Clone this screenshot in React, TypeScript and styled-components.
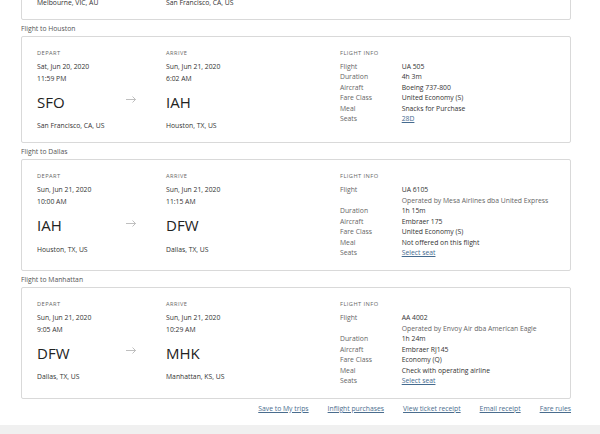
import React from 'react';
import styled, { createGlobalStyle } from 'styled-components';

type Stop = { date: string; time: string; code: string; city: string };
type InfoRow = { label: string; value: string; note?: string; link?: boolean };
type Leg = { title: string; depart: Stop; arrive: Stop; info: InfoRow[] };

const legs: Leg[] = [
    {
        title: 'Flight to San Francisco',
        depart: { date: 'Sat, Jun 20, 2020', time: '9:40 AM', code: 'MEL', city: 'Melbourne, VIC, AU' },
        arrive: { date: 'Sat, Jun 20, 2020', time: '6:10 AM', code: 'SFO', city: 'San Francisco, CA, US' },
        info: [
            { label: 'Flight', value: 'UA 60' },
            { label: 'Duration', value: '15h 30m' },
            { label: 'Aircraft', value: 'Boeing 787-9' },
            { label: 'Fare Class', value: 'United Economy (S)' },
            { label: 'Meal', value: 'Dinner' },
            { label: 'Seats', value: '41L', link: true },
        ],
    },
    {
        title: 'Flight to Houston',
        depart: { date: 'Sat, Jun 20, 2020', time: '11:59 PM', code: 'SFO', city: 'San Francisco, CA, US' },
        arrive: { date: 'Sun, Jun 21, 2020', time: '6:02 AM', code: 'IAH', city: 'Houston, TX, US' },
        info: [
            { label: 'Flight', value: 'UA 505' },
            { label: 'Duration', value: '4h 3m' },
            { label: 'Aircraft', value: 'Boeing 737-800' },
            { label: 'Fare Class', value: 'United Economy (S)' },
            { label: 'Meal', value: 'Snacks for Purchase' },
            { label: 'Seats', value: '28D', link: true },
        ],
    },
    {
        title: 'Flight to Dallas',
        depart: { date: 'Sun, Jun 21, 2020', time: '10:00 AM', code: 'IAH', city: 'Houston, TX, US' },
        arrive: { date: 'Sun, Jun 21, 2020', time: '11:15 AM', code: 'DFW', city: 'Dallas, TX, US' },
        info: [
            { label: 'Flight', value: 'UA 6105', note: 'Operated by Mesa Airlines dba United Express' },
            { label: 'Duration', value: '1h 15m' },
            { label: 'Aircraft', value: 'Embraer 175' },
            { label: 'Fare Class', value: 'United Economy (S)' },
            { label: 'Meal', value: 'Not offered on this flight' },
            { label: 'Seats', value: 'Select seat', link: true },
        ],
    },
    {
        title: 'Flight to Manhattan',
        depart: { date: 'Sun, Jun 21, 2020', time: '9:05 AM', code: 'DFW', city: 'Dallas, TX, US' },
        arrive: { date: 'Sun, Jun 21, 2020', time: '10:29 AM', code: 'MHK', city: 'Manhattan, KS, US' },
        info: [
            { label: 'Flight', value: 'AA 4002', note: 'Operated by Envoy Air dba American Eagle' },
            { label: 'Duration', value: '1h 24m' },
            { label: 'Aircraft', value: 'Embraer RJ145' },
            { label: 'Fare Class', value: 'Economy (Q)' },
            { label: 'Meal', value: 'Check with operating airline' },
            { label: 'Seats', value: 'Select seat', link: true },
        ],
    },
];

const actions = ['Save to My trips', 'Inflight purchases', 'View ticket receipt', 'Email receipt', 'Fare rules'];

const GlobalStyle = createGlobalStyle`
    html, body {
        margin: 0;
        padding: 0;
        background: #fff;
        overflow: hidden;
    }
    body {
        font-family: "Open Sans", "Liberation Sans", sans-serif;
        color: #333;
    }
`;

// the list is scrolled: only the tail of the first leg shows
const Page = styled.div`
    width: 550px;
    margin: -104px 0 0 21px;
`;

const LegTitle = styled.div`
    margin: 4px 0 2px;
    font-size: 6.8px;
    line-height: 10px;
    color: #555;
`;

const Card = styled.div`
    display: grid;
    grid-template-columns: 89px 40px 174px 1fr;
    padding: 12px 0 11px 15px;
    border: 1px solid #d9d9d9;
    border-radius: 2px;
    background: #fff;
`;

const StopCol = styled.div`
    display: flex;
    flex-direction: column;
`;

const Caption = styled.div`
    font-size: 5.7px;
    line-height: 8px;
    letter-spacing: 0.45px;
    text-transform: uppercase;
    color: #666;
`;

const DateLine = styled.div`
    margin-top: 4px;
    font-size: 6.8px;
    line-height: 12px;
    color: #333;
`;

const TimeLine = styled.div`
    font-size: 6.8px;
    line-height: 11px;
    color: #333;
`;

const Code = styled.div`
    margin-top: 8px;
    font-size: 15px;
    line-height: 20px;
    color: #222;
`;

const City = styled.div`
    margin-top: 8.5px;
    font-size: 6.8px;
    line-height: 11px;
    color: #333;
`;

const ArrowCell = styled.div`
    padding-top: 47.5px;

    svg {
        display: block;
    }
`;

const InfoGrid = styled.div`
    display: grid;
    grid-template-columns: 61.7px 1fr;
    grid-template-rows: 13.4px;
    grid-auto-rows: 10.5px;
    align-content: start;
    font-size: 6.8px;
    line-height: 10.5px;
`;

const InfoCaption = styled(Caption)`
    grid-column: 1 / -1;
`;

const InfoLabel = styled.div`
    color: #666;
    white-space: nowrap;
`;

const InfoValue = styled.div<{ $muted?: boolean }>`
    color: ${p => (p.$muted ? '#666' : '#333')};
    white-space: nowrap;
`;

const SeatLink = styled.a`
    color: #456b8f;
    text-decoration: underline;
`;

const Actions = styled.div`
    display: flex;
    justify-content: flex-end;
    gap: 19px;
    margin-top: 4px;
    font-size: 6.8px;
    line-height: 11px;
`;

const ActionLink = styled.a`
    color: #4a6d8e;
    text-decoration: underline;
`;

const Footer = styled.div`
    height: 40px;
    margin-top: 11px;
    background: #f0f0f0;
`;

const Arrow = () => (
    <svg width="10" height="7" viewBox="0 0 10 7" fill="none" stroke="#b8b8b8" strokeWidth="0.9">
        <path d="M0 3.5H9.5M6.5 0.5L9.5 3.5L6.5 6.5" />
    </svg>
);

const StopBlock = ({ label, stop }: { label: string; stop: Stop }) => (
    <StopCol>
        <Caption>{label}</Caption>
        <DateLine>{stop.date}</DateLine>
        <TimeLine>{stop.time}</TimeLine>
        <Code>{stop.code}</Code>
        <City>{stop.city}</City>
    </StopCol>
);

const FlightCard = ({ leg }: { leg: Leg }) => (
    <>
        <LegTitle>{leg.title}</LegTitle>
        <Card>
            <StopBlock label="Depart" stop={leg.depart} />
            <ArrowCell>
                <Arrow />
            </ArrowCell>
            <StopBlock label="Arrive" stop={leg.arrive} />
            <InfoGrid>
                <InfoCaption>Flight info</InfoCaption>
                {leg.info.map(row => (
                    <React.Fragment key={row.label}>
                        <InfoLabel>{row.label}</InfoLabel>
                        <InfoValue>
                            {row.link ? <SeatLink href="#">{row.value}</SeatLink> : row.value}
                        </InfoValue>
                        {row.note && (
                            <>
                                <InfoLabel />
                                <InfoValue $muted>{row.note}</InfoValue>
                            </>
                        )}
                    </React.Fragment>
                ))}
            </InfoGrid>
        </Card>
    </>
);

export default function App() {
    return (
        <>
            <GlobalStyle />
            <Page>
                {legs.map(leg => (
                    <FlightCard key={leg.title} leg={leg} />
                ))}
                <Actions>
                    {actions.map(a => (
                        <ActionLink key={a} href="#">{a}</ActionLink>
                    ))}
                </Actions>
            </Page>
            <Footer />
        </>
    );
}
